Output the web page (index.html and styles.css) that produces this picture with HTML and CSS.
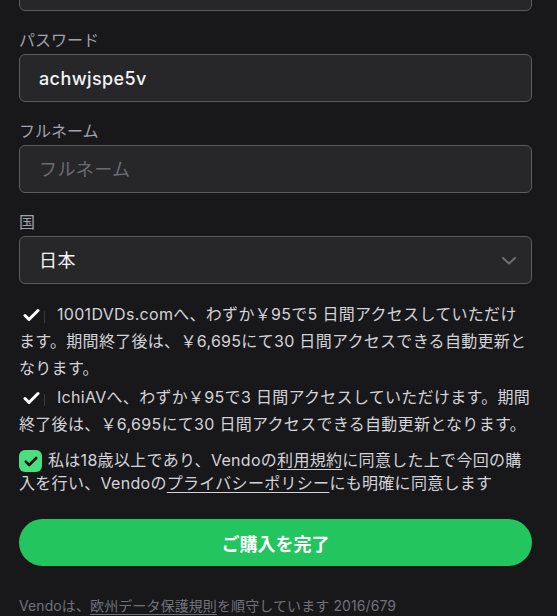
FILE: index.html
```html
<!DOCTYPE html>
<html lang="ja">
<head>
<meta charset="utf-8">
<title>Vendo</title>
<link rel="stylesheet" href="styles.css">
</head>
<body>
<form class="form">
  <div class="input prev"></div>

  <div class="field">
    <label class="label">パスワード</label>
    <input class="input" type="text" value="achwjspe5v">
  </div>

  <div class="field">
    <label class="label">フルネーム</label>
    <input class="input" type="text" placeholder="フルネーム">
  </div>

  <div class="field">
    <label class="label">国</label>
    <div class="select-wrap">
      <select class="input select">
        <option>日本</option>
      </select>
      <svg class="chevron" width="14" height="8" viewBox="0 0 14 8"><path d="M1 1l6 5.5L13 1" fill="none" stroke="#6e6e74" stroke-width="2" stroke-linecap="round" stroke-linejoin="round"/></svg>
    </div>
  </div>

  <p class="offer first"><span class="tick"><svg width="17" height="14" viewBox="0 0 17 14"><path d="M2 7.5l4 4L15 2.5" fill="none" stroke="#ffffff" stroke-width="3" stroke-linecap="round" stroke-linejoin="round"/></svg><span class="tick-line"></span></span><span class="ln">1001DVDs.comへ、わずか￥95で5 日間アクセスしていただけ</span><br><span class="ln">ます。期間終了後は、￥6,695にて30 日間アクセスできる自動更新と</span><br><span class="ln">なります。</span></p>

  <p class="offer"><span class="tick"><svg width="17" height="14" viewBox="0 0 17 14"><path d="M2 7.5l4 4L15 2.5" fill="none" stroke="#ffffff" stroke-width="3" stroke-linecap="round" stroke-linejoin="round"/></svg><span class="tick-line"></span></span><span class="ln">IchiAVへ、わずか￥95で3 日間アクセスしていただけます。期間</span><br><span class="ln">終了後は、￥6,695にて30 日間アクセスできる自動更新となります。</span></p>

  <p class="agree"><span class="box"><svg width="14" height="11" viewBox="0 0 14 11"><path d="M1.8 5.6l3.4 3.4L12.2 2" fill="none" stroke="#111111" stroke-width="2.6" stroke-linecap="round" stroke-linejoin="round"/></svg></span><span class="ln">私は18歳以上であり、Vendoの<a class="link" href="#">利用規約</a>に同意した上で今回の購</span><br><span class="ln">入を行い、Vendoの<a class="link" href="#">プライバシーポリシー</a>にも明確に同意します</span></p>

  <button class="submit" type="button">ご購入を完了</button>

  <p class="footer">Vendoは、<a class="link" href="#">欧州データ保護規則</a>を順守しています 2016/679</p>
</form>
</body>
</html>
```

FILE: styles.css
```css
* { box-sizing: border-box; }

html, body {
  margin: 0;
  padding: 0;
  background: #18181b;
  height: 100%;
  overflow: hidden;
}

body {
  font-family: Inter, "Noto Sans CJK JP", sans-serif;
  color: #d4d4d8;
}

.form {
  display: flex;
  flex-direction: column;
  padding: 0 25px 0 19px;
  margin: -37px 0 0 0;
  width: 557px;
}

.field {
  display: flex;
  flex-direction: column;
  gap: 4px;
  margin-top: 19px;
}

.label {
  font-size: 16px;
  line-height: 20px;
  color: #a1a1aa;
}

.input {
  display: block;
  width: 513px;
  height: 48px;
  border: 1px solid #5a5a5f;
  border-radius: 6px;
  background: #27272a;
  color: #f4f4f5;
  font-family: Inter, "Noto Sans CJK JP", sans-serif;
  font-size: 18px;
  font-weight: 500;
  letter-spacing: 0.4px;
  padding: 0 19px;
  outline: none;
  margin: 0;
}

.input::placeholder {
  color: #6b6b72;
  font-weight: 400;
}

.prev { flex: none; }

.select-wrap {
  position: relative;
  width: 513px;
}

.select {
  appearance: none;
  -webkit-appearance: none;
  font-weight: 400;
}

.chevron {
  position: absolute;
  right: 16px;
  top: 21px;
  pointer-events: none;
}

.ln { white-space: nowrap; }

.offer {
  margin: 2px 0 0 0;
  font-size: 16px;
  line-height: 27px;
  letter-spacing: 0.3px;
  color: #d4d4d8;
  width: 536px;
}

.offer.first { margin-top: 17px; }

.tick {
  float: left;
  display: flex;
  align-items: center;
  width: 38px;
  height: 27px;
  padding: 1px 0 0 4px;
  gap: 4px;
}

.tick-line {
  display: block;
  width: 1px;
  height: 12px;
  margin-top: 3px;
  background: #3a3a3e;
}

.agree {
  margin: 11px 0 0 0;
  font-size: 16px;
  line-height: 23px;
  letter-spacing: 0.3px;
  color: #d4d4d8;
  width: 536px;
}

.box {
  float: left;
  display: flex;
  align-items: center;
  justify-content: center;
  width: 23px;
  height: 22px;
  border-radius: 6px;
  background: #4ade80;
  margin: 1px 6px 0 0;
}

.link {
  color: inherit;
  text-decoration: underline;
  text-underline-offset: 3px;
}

.submit {
  margin-top: 24px;
  width: 513px;
  height: 47px;
  border: none;
  border-radius: 24px;
  background: #22c55e;
  color: #ffffff;
  font-family: Inter, "Noto Sans CJK JP", sans-serif;
  font-size: 18px;
  font-weight: 700;
  cursor: pointer;
}

.footer {
  margin: 30px 0 0 0;
  font-size: 14px;
  line-height: 20px;
  letter-spacing: 0.1px;
  color: #71717a;
}
```
